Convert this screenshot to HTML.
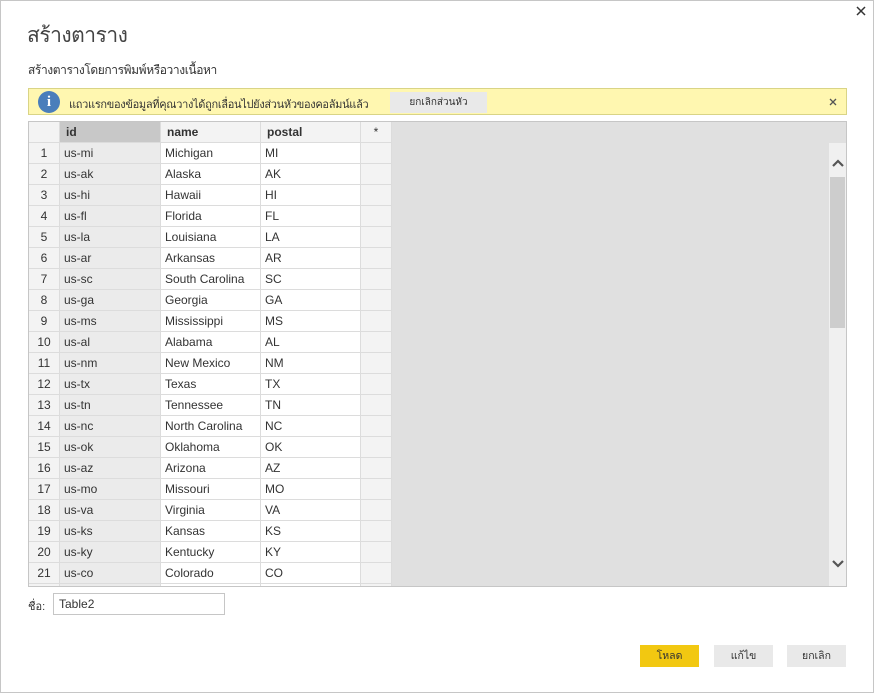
<!DOCTYPE html>
<html><head><meta charset="utf-8"><style>
*{box-sizing:border-box;margin:0;padding:0}
body{width:874px;height:693px;background:#fff;font-family:"Liberation Sans","Noto Sans CJK SC",sans-serif;color:#333;position:relative;overflow:hidden}
.frame{position:absolute;left:0;top:0;width:874px;height:693px;border:1px solid #c6c6c6}
.abs{position:absolute}
table{border-collapse:collapse;table-layout:fixed;font-size:12px}
td{height:21px;border:1px solid #dcdcdc;padding:0 4px;white-space:nowrap;overflow:hidden}
.btn{position:absolute;height:22px;font-size:10.5px;text-align:center;line-height:22px;background:#e9e9e9;color:#333}
</style></head><body>
<div class="frame"></div>
<svg class="abs" style="left:856px;top:6px" width="10" height="10"><path d="M1 1 L9 9 M9 1 L1 9" stroke="#333" stroke-width="1.5"/></svg>
<div class="abs" style="left:27px;top:19px;font-size:21px;color:#444;letter-spacing:-0.5px">สร้างตาราง</div>
<div class="abs" style="left:28px;top:61px;font-size:12px;color:#333;letter-spacing:-0.4px">สร้างตารางโดยการพิมพ์หรือวางเนื้อหา</div>
<div class="abs" style="left:28px;top:88px;width:819px;height:27px;background:#fff7b0;border:1px solid #d9d486"></div>
<div class="abs" style="left:38px;top:91px;width:22px;height:22px;border-radius:50%;background:#4a7ebb;color:#fff;font:bold 15px 'Liberation Serif',serif;text-align:center;line-height:22px">i</div>
<div class="abs" style="left:69px;top:95px;font-size:11px;color:#333;letter-spacing:-0.3px">แถวแรกของข้อมูลที่คุณวางได้ถูกเลื่อนไปยังส่วนหัวของคอลัมน์แล้ว</div>
<div class="btn" style="left:390px;top:92px;width:97px;height:21px;line-height:21px;font-size:10px">ยกเลิกส่วนหัว</div>
<svg class="abs" style="left:829px;top:98px" width="8" height="8"><path d="M1 1 L7 7 M7 1 L1 7" stroke="#555" stroke-width="1.3"/></svg>
<div class="abs" style="left:28px;top:121px;width:819px;height:466px;background:#e0e0e0;border:1px solid #c6c6c6;overflow:hidden">
<table class="abs" style="left:-1px;top:-1px;width:363px">
<colgroup><col style="width:31px"><col style="width:101px"><col style="width:100px"><col style="width:100px"><col style="width:31px"></colgroup>
<tr style="background:#f3f3f3;font-weight:bold"><td></td><td style="background:#c8c8c8;padding-left:6px">id</td><td style="padding-left:6px">name</td><td style="padding-left:6px">postal</td><td style="text-align:center;font-weight:normal">*</td></tr>
</table>
<table class="abs" id="t" style="left:-1px;top:20px;width:363px"></table>
<div class="abs" style="left:800px;top:21px;width:17px;height:443px;background:#f0f0f0"></div>
<div class="abs" style="left:801px;top:55px;width:15px;height:151px;background:#cdcdcd"></div>
<svg class="abs" style="left:802px;top:36px" width="14" height="10"><path d="M2 8 L7 3 L12 8" stroke="#555" stroke-width="2.2" fill="none"/></svg>
<svg class="abs" style="left:802px;top:437px" width="14" height="10"><path d="M2 2 L7 7 L12 2" stroke="#555" stroke-width="2.2" fill="none"/></svg>
</div>
<div class="abs" style="left:28px;top:597px;font-size:11px">ชื่อ:</div>
<div class="abs" style="left:53px;top:593px;width:172px;height:22px;border:1px solid #c6c6c6;font-size:12px;padding:3px 5px">Table2</div>
<div class="btn" style="left:640px;top:645px;width:59px;background:#f2c811">โหลด</div>
<div class="btn" style="left:714px;top:645px;width:59px">แก้ไข</div>
<div class="btn" style="left:787px;top:645px;width:59px">ยกเลิก</div>
<script>
var d=[["us-mi","Michigan","MI"],["us-ak","Alaska","AK"],["us-hi","Hawaii","HI"],["us-fl","Florida","FL"],["us-la","Louisiana","LA"],["us-ar","Arkansas","AR"],["us-sc","South Carolina","SC"],["us-ga","Georgia","GA"],["us-ms","Mississippi","MS"],["us-al","Alabama","AL"],["us-nm","New Mexico","NM"],["us-tx","Texas","TX"],["us-tn","Tennessee","TN"],["us-nc","North Carolina","NC"],["us-ok","Oklahoma","OK"],["us-az","Arizona","AZ"],["us-mo","Missouri","MO"],["us-va","Virginia","VA"],["us-ks","Kansas","KS"],["us-ky","Kentucky","KY"],["us-co","Colorado","CO"],["","",""]];
var h='<colgroup><col style="width:31px"><col style="width:101px"><col style="width:100px"><col style="width:100px"><col style="width:31px"></colgroup>';
d.forEach(function(r,i){h+='<tr><td style="background:#f3f3f3;text-align:center;padding:0">'+(i<21?i+1:'')+'</td><td style="background:#ebebeb">'+r[0]+'</td><td style="background:#fff">'+r[1]+'</td><td style="background:#fff">'+r[2]+'</td><td style="background:#f3f3f3"></td></tr>';});
document.getElementById('t').innerHTML=h;
</script>
</body></html>
